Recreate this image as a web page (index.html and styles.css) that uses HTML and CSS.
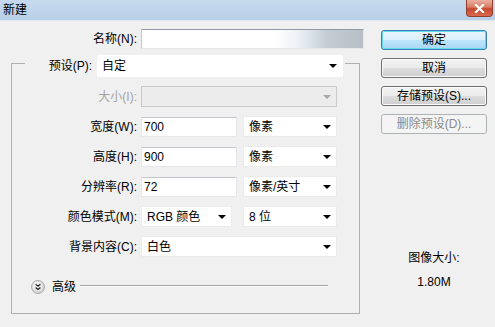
FILE: index.html
```html
<!DOCTYPE html>
<html lang="zh-CN">
<head>
    <meta charset="UTF-8"/>
    <title>新建</title>
    <link rel="stylesheet" href="styles.css">
</head>
<body>
<div class="window">
    <div class="titlebar">
        <span class="title">新建</span>
        <span class="close">
            <svg width="11" height="9" viewBox="0 0 11 9">
                <path d="M2 1 L9 8 M9 1 L2 8" stroke="#fff" stroke-width="2.2" stroke-linecap="square"/>
            </svg>
        </span>
    </div>

    <div class="dialog">
        <div class="form">
            <div class="row name-row">
                <label>名称(N):</label>
                <input class="field name-field" type="text"/>
            </div>

            <fieldset class="group">
                <legend>
                    <div class="preset">
                        <label>预设(P):</label>
                        <div class="select preset-select"><span>自定</span><i class="caret"></i></div>
                    </div>
                </legend>

                <div class="row">
                    <label class="disabled">大小(I):</label>
                    <div class="select disabled w-wide"><span></span><i class="caret"></i></div>
                </div>
                <div class="row">
                    <label>宽度(W):</label>
                    <input class="field w-num" type="text" value="700"/>
                    <div class="select w-unit"><span>像素</span><i class="caret"></i></div>
                </div>
                <div class="row">
                    <label>高度(H):</label>
                    <input class="field w-num" type="text" value="900"/>
                    <div class="select w-unit"><span>像素</span><i class="caret"></i></div>
                </div>
                <div class="row">
                    <label>分辨率(R):</label>
                    <input class="field w-num" type="text" value="72"/>
                    <div class="select w-unit"><span>像素/英寸</span><i class="caret"></i></div>
                </div>
                <div class="row">
                    <label>颜色模式(M):</label>
                    <div class="select w-mode"><span>RGB 颜色</span><i class="caret"></i></div>
                    <div class="select w-bits"><span>8 位</span><i class="caret"></i></div>
                </div>
                <div class="row">
                    <label>背景内容(C):</label>
                    <div class="select w-wide"><span>白色</span><i class="caret"></i></div>
                </div>

                <div class="advanced">
                    <svg class="adv-icon" width="14" height="14" viewBox="0 0 14 14">
                        <defs>
                            <radialGradient id="advBg" cx="0.4" cy="0.35" r="0.7">
                                <stop offset="0" stop-color="#ffffff"/>
                                <stop offset="1" stop-color="#d2d2d2"/>
                            </radialGradient>
                        </defs>
                        <circle cx="7" cy="7" r="6.4" fill="url(#advBg)" stroke="#a2a2a2"/>
                        <path d="M4.6 4.2 L7 6.2 L9.4 4.2 M4.6 7.4 L7 9.4 L9.4 7.4" fill="none" stroke="#2a2a2a" stroke-width="1.3"/>
                    </svg>
                    <span class="adv-text">高级</span>
                    <span class="adv-line"></span>
                </div>
            </fieldset>
        </div>

        <div class="side">
            <button class="btn default">确定</button>
            <button class="btn">取消</button>
            <button class="btn">存储预设(S)...</button>
            <button class="btn" disabled>删除预设(D)...</button>
            <div class="info">图像大小:<br>1.80M</div>
        </div>
    </div>
</div>
</body>
</html>
```

FILE: styles.css
```css
body {
    margin: 0;
    background: #f0f0f0;
    font-family: "Liberation Sans", "Noto Sans CJK SC", sans-serif;
    font-size: 12px;
    line-height: 16px;
    color: #000;
}

.window {
    width: 495px;
    height: 327px;
    overflow: hidden;
}

.titlebar {
    height: 20px;
    display: flex;
    justify-content: space-between;
    align-items: flex-start;
    background: linear-gradient(#c6daef, #b8cfe8);
    border-bottom: 1px solid #dfe8f2;
}

.title {
    padding-left: 3px;
    line-height: 20px;
}

.close {
    box-sizing: border-box;
    width: 27px;
    height: 17px;
    margin-right: 2px;
    display: flex;
    align-items: center;
    justify-content: center;
    border: 1px solid #93402f;
    border-top: none;
    border-radius: 0 0 4px 4px;
    background: linear-gradient(#eab0a2, #d77a62 45%, #c4472d 55%, #d66b4f);
}

.dialog {
    display: flex;
}

.form {
    width: 365px;
}

.row {
    display: flex;
    align-items: center;
    height: 21px;
}

.row label {
    width: 125px;
    margin-right: 4px;
    text-align: right;
    white-space: nowrap;
}

.row label.disabled {
    color: #a3a3a3;
}

.name-row {
    height: 20px;
    margin-top: 8px;
}

.name-row label {
    width: 137px;
}

.field {
    box-sizing: border-box;
    height: 20px;
    padding: 0 2px;
    border: 1px solid #e6e7ea;
    border-top-color: #c4c6cb;
    background: #fff;
    font: inherit;
    color: #000;
    outline: none;
}

.name-field {
    width: 223px;
    border-top-color: #8f9aa6;
    border-left-color: #c3c8ce;
    background: linear-gradient(to right, #fff 60%, #eef3f7 70%, #c3cbd3 84%, #b7bec6);
}

.group {
    box-sizing: border-box;
    width: 349px;
    min-width: 0;
    margin: 0 0 0 11px;
    padding: 0 0 18px;
    border: 1px solid #b0b0b0;
}

.group legend {
    margin-left: 13px;
    padding: 6px 2px 0 0;
}

.preset {
    display: flex;
    align-items: center;
}

.preset label {
    width: 67px;
    margin-right: 5px;
    text-align: right;
}

.select {
    box-sizing: border-box;
    height: 21px;
    display: flex;
    align-items: center;
    justify-content: space-between;
    padding: 0 5px 0 5px;
    background: #fff;
    border: 1px solid #ebebeb;
    white-space: nowrap;
}

.caret {
    width: 0;
    height: 0;
    border-left: 4px solid transparent;
    border-right: 4px solid transparent;
    border-top: 4px solid #000;
}

.preset-select {
    width: 246px;
    height: 22px;
    padding-left: 4px;
    border-color: #fff;
}

.select.disabled {
    background: #ececec;
    border-color: #c9c9c9;
}

.select.disabled .caret {
    border-top-color: #a8a8a8;
}

.group .row {
    margin-top: 9px;
}

.w-wide {
    width: 196px;
}

.w-num {
    width: 96px;
}

.w-unit {
    width: 94px;
    margin-left: 6px;
}

.w-mode {
    width: 91px;
}

.w-bits {
    width: 94px;
    margin-left: 11px;
}

.advanced {
    display: flex;
    align-items: center;
    height: 16px;
    margin-top: 22px;
    padding-left: 19px;
}

.adv-text {
    margin-left: 7px;
}

.adv-line {
    flex: 1;
    height: 0;
    margin: -3px 31px 0 4px;
    border-top: 1px solid #a5a5a5;
    border-bottom: 1px solid #fff;
}

.side {
    width: 106px;
    margin-left: 16px;
    padding-top: 9px;
    display: flex;
    flex-direction: column;
    gap: 8px;
}

.btn {
    box-sizing: border-box;
    height: 20px;
    padding: 0;
    border: 1px solid #707070;
    border-radius: 3px;
    background: linear-gradient(#f2f2f2, #ebebeb 50%, #dddddd 50%, #cfcfcf);
    box-shadow: inset 0 0 0 1px #fbfbfb;
    font: inherit;
    color: #000;
}

.btn.default {
    border-color: #3c7fb1;
    background: linear-gradient(#eaf6fd, #d9f0fc 50%, #bee6fd 50%, #a7d9f5);
    box-shadow: inset 0 0 0 1px #62dcf3;
}

.btn:disabled {
    border-color: #adb2b5;
    background: #f4f4f4;
    box-shadow: none;
    color: #8a8a8a;
}

.info {
    margin-top: 104px;
    text-align: center;
    line-height: 24px;
}
```
